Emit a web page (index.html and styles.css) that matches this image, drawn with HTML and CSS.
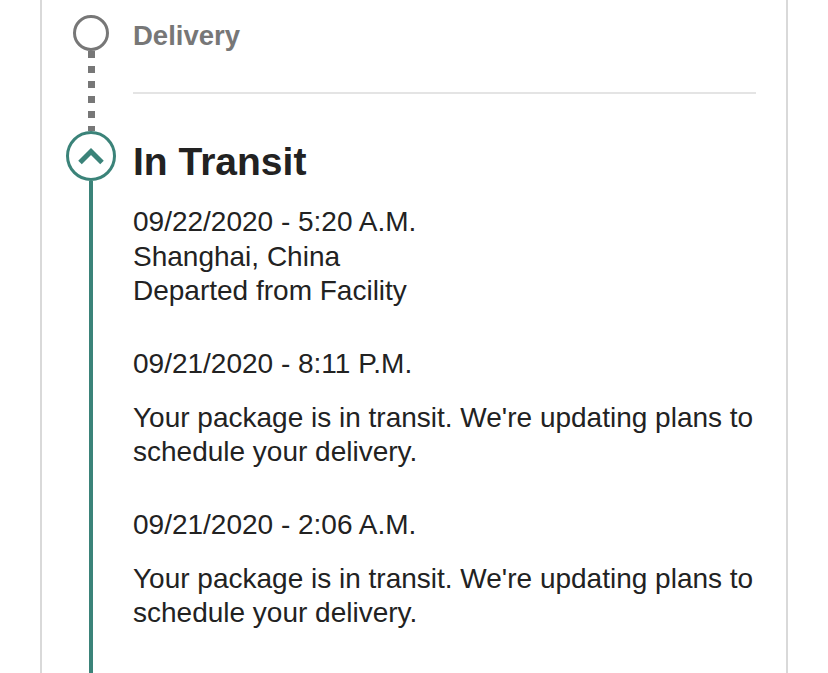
FILE: index.html
```html
<!DOCTYPE html>
<html lang="en">
<head>
<meta charset="utf-8">
<title>Tracking</title>
<link rel="stylesheet" href="styles.css">
</head>
<body>
<div class="card">
  <div class="step step-upcoming">
    <div class="rail">
      <span class="dot dot-gray"></span>
      <span class="line line-dotted"></span>
    </div>
    <div class="step-body">
      <h2 class="step-title-muted">Delivery</h2>
      <div class="separator"></div>
    </div>
  </div>
  <div class="step step-current">
    <div class="rail">
      <span class="dot dot-teal">
        <svg class="chevron" viewBox="0 0 44 44" width="44" height="44" aria-hidden="true">
          <polyline points="11,28.5 22,17.5 33,28.5" fill="none" stroke="#3b8379" stroke-width="5" stroke-linejoin="miter"/>
        </svg>
      </span>
      <span class="line line-solid"></span>
    </div>
    <div class="step-body">
      <h1 class="step-title">In Transit</h1>
      <div class="event">
        <p class="line-text">09/22/2020 - 5:20 A.M.</p>
        <p class="line-text">Shanghai, China</p>
        <p class="line-text">Departed from Facility</p>
      </div>
      <div class="event">
        <p class="line-text">09/21/2020 - 8:11 P.M.</p>
        <p class="line-text message">Your package is in transit. We're updating plans to schedule your delivery.</p>
      </div>
      <div class="event">
        <p class="line-text">09/21/2020 - 2:06 A.M.</p>
        <p class="line-text message">Your package is in transit. We're updating plans to schedule your delivery.</p>
      </div>
    </div>
  </div>
</div>
</body>
</html>
```

FILE: styles.css
```css
html, body {
  margin: 0;
  padding: 0;
  background: #ffffff;
}

body {
  font-family: "Liberation Sans", Arial, Helvetica, sans-serif;
  color: #222222;
  overflow: hidden;
}

.card {
  margin-left: 40px;
  width: 748px;
  min-height: 673px;
  box-sizing: border-box;
  border-left: 2px solid #d9d9d9;
  border-right: 2px solid #d9d9d9;
  padding: 15px 24px 0 24px;
  display: flex;
  flex-direction: column;
}

.step {
  display: flex;
  gap: 17px;
}

.step-current {
  flex: 1;
}

.rail {
  width: 50px;
  flex: 0 0 50px;
  display: flex;
  flex-direction: column;
  align-items: center;
}

.dot {
  display: flex;
  align-items: center;
  justify-content: center;
  box-sizing: border-box;
  border-radius: 50%;
  flex: 0 0 auto;
}

.dot-gray {
  width: 36px;
  height: 36px;
  border: 3px solid #777777;
}

.dot-teal {
  width: 50px;
  height: 50px;
  border: 3px solid #3b8379;
}

.chevron {
  display: block;
}

.line {
  flex: 1;
}

.line-dotted {
  width: 7px;
  background: repeating-linear-gradient(to bottom, #777777 0, #777777 7px, transparent 7px, transparent 15px);
}

.line-solid {
  width: 4px;
  background: #3b8379;
}

.step-body {
  flex: 1;
  min-width: 0;
}

.step-upcoming .step-body {
  padding-bottom: 37px;
}

.step-title-muted {
  margin: 0;
  padding-top: 3px;
  font-size: 27.5px;
  line-height: 36px;
  font-weight: bold;
  color: #777777;
}

.separator {
  margin-top: 38px;
  margin-right: 6px;
  height: 2px;
  background: #e4e4e4;
}

.step-title {
  margin: 0;
  padding-top: 6px;
  font-size: 39px;
  line-height: 50px;
  font-weight: bold;
  color: #222222;
}

.event {
  margin-top: 38px;
}

.event:first-of-type {
  margin-top: 18px;
}

.line-text {
  margin: 0;
  font-size: 28px;
  line-height: 34.5px;
}

.message {
  margin-top: 19.5px;
}
```
